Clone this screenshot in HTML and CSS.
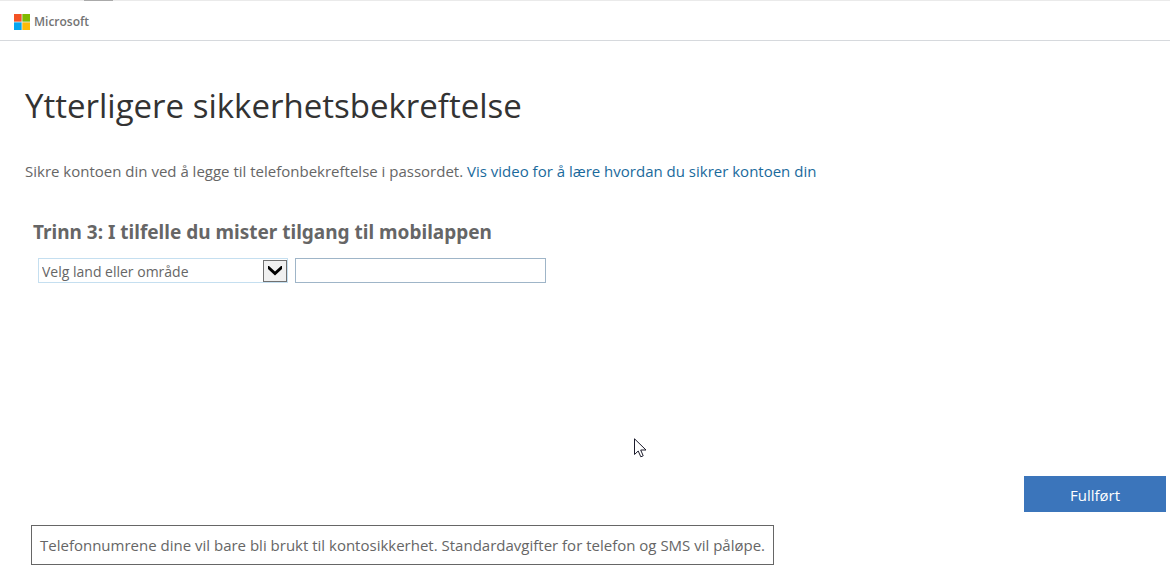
FILE: index.html
```html
<!DOCTYPE html>
<html lang="no">
<head>
  <meta charset="UTF-8">
  <meta name="viewport" content="width=device-width, initial-scale=1.0">
  <title>Ytterligere sikkerhetsbekreftelse</title>
  <link rel="stylesheet" href="styles.css">
</head>
<body>
  <header class="header">
    <div class="tab-edge"></div>
    <svg class="logo" width="16" height="16" viewBox="0 0 16 16" aria-hidden="true">
      <rect width="16" height="16" fill="#e4ecf0"/>
      <rect width="7.6" height="7.6" fill="#f35325"/>
      <rect x="8.4" width="7.6" height="7.6" fill="#7fba00"/>
      <rect y="8.4" width="7.6" height="7.6" fill="#05a6f0"/>
      <rect x="8.4" y="8.4" width="7.6" height="7.6" fill="#ffba08"/>
    </svg>
    <span class="brand">Microsoft</span>
  </header>

  <main class="content">
    <h1>Ytterligere sikkerhetsbekreftelse</h1>
    <p class="intro">Sikre kontoen din ved å legge til telefonbekreftelse i passordet. <a href="#">Vis video for å lære hvordan du sikrer kontoen din</a></p>

    <form class="phone-form">
      <h2 id="step">Trinn 3: I tilfelle du mister tilgang til mobilappen</h2>
      <div class="fields">
        <div class="select-box">
          <select class="country" aria-labelledby="step">
            <option>Velg land eller område</option>
          </select>
          <span class="arrow">
            <svg width="14" height="10" viewBox="0 0 14 10" aria-hidden="true">
              <path d="M0 0v3l7 6.500L14 3V0h-1L7 5.500 1 0z" fill="#000"/>
            </svg>
          </span>
        </div>
        <input class="phone" type="tel" aria-labelledby="step">
      </div>
      <div class="actions">
        <button class="finish" type="button">Fullført</button>
      </div>
    </form>

    <p class="note">Telefonnumrene dine vil bare bli brukt til kontosikkerhet. Standardavgifter for telefon og SMS vil påløpe.</p>
  </main>

  <svg class="cursor" width="13" height="20" viewBox="0 0 13 20" aria-hidden="true">
    <path d="M.5 .8V16.5L4.2 13l2.6 5.8 2.4-1L6.700 12H12z" fill="#fff" stroke="#1c1c2c"/>
  </svg>
</body>
</html>
```
FILE: styles.css
```css
body {
  margin: 0;
  background: #fff;
  color: #666;
  font-family: "Segoe UI", "Open Sans", sans-serif;
  font-size: 15px;
  line-height: 20px;
}

/* Topplinje */
.header {
  position: relative;
  display: flex;
  align-items: center;
  gap: 4px;
  height: 37px;
  padding: 2px 14px 0;
  border-top: 1px solid #eaeaea;
  border-bottom: 1px solid #d6d9dd;
}
.tab-edge {
  position: absolute;
  top: -1px;
  left: 84px;
  width: 29px;
  height: 1px;
  background: #aaa;
}
.logo {
  display: block;
}
.brand {
  color: #737373;
  font-size: 12px;
  font-weight: 600;
}

/* Innhold */
.content {
  padding: 41px 4px 0 25px;
}
h1 {
  margin: 0;
  color: #333;
  font-size: 33px;
  font-weight: 400;
  line-height: 48px;
}
.intro {
  margin: 31px 0 0;
}
a {
  color: #1a6a9c;
  text-decoration: none;
}
h2 {
  margin: 37px 8px 0;
  font-family: "Segoe UI", "Noto Sans", sans-serif;
  font-size: 19px;
  font-weight: 700;
  line-height: 28px;
}

/* Telefonfelt */
.fields {
  display: flex;
  gap: 7px;
  margin: 12px 13px 0;
}
.select-box {
  position: relative;
  width: 250px;
}
.country,
.phone {
  display: block;
  box-sizing: border-box;
  width: 100%;
  height: 25px;
  margin: 0;
  border-radius: 0;
  background: #fff;
  color: #666;
  font: inherit;
}
.country {
  appearance: none;
  padding: 2px 28px 0 3px;
  border: 1px solid #c5dff0;
  font-size: 14px;
}
.phone {
  width: 251px;
  padding: 0 4px;
  border: 1px solid #9fb5c8;
}
.arrow {
  position: absolute;
  top: 2px;
  right: 1px;
  display: flex;
  align-items: center;
  justify-content: center;
  box-sizing: border-box;
  width: 24px;
  height: 22px;
  border: 1px solid #707070;
  background: #f0f0f0;
  pointer-events: none;
}

/* Knapp og merknad */
.actions {
  display: flex;
  justify-content: flex-end;
  margin-top: 193px;
}
.finish {
  width: 142px;
  height: 36px;
  padding: 2px 0 0;
  border: 0;
  background: #3b75bb;
  color: #fff;
  font: inherit;
}
.note {
  width: fit-content;
  margin: 13px 6px 0;
  padding: 9px 8px;
  border: 1px solid #666;
}

.cursor {
  position: absolute;
  top: 438px;
  left: 634px;
}
```
